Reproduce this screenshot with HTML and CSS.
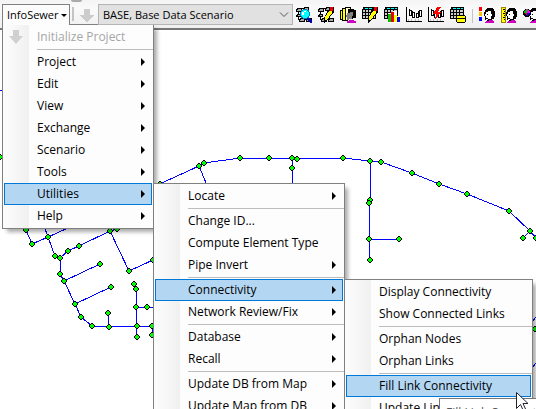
FILE: index.html
```html
<!DOCTYPE html>
<html lang="en">
<head>
<meta charset="utf-8">
<title>InfoSewer</title>
<link rel="stylesheet" href="styles.css">
</head>
<body>
<svg class="defs" aria-hidden="true">
  <defs>
    <symbol id="arrow" viewBox="0 0 14 14"><path d="M4 0h6v6h4l-7 8-7-8h4z"/></symbol>
    <symbol id="net" viewBox="0 0 16 16">
      <path fill="none" stroke="#000" d="M2.5 2.5v5h-2M9 1.500H5M2.500 7.500v5H6M9.500 2v4M4 12.500h9"/>
      <path d="M1 1h5v4H0V2h1zM8 0h5v4H7V1h1zM1 7h4v3H0V8h1zM4 11h5v4H3v-3h1zM11 11h5v4h-6v-3h1z"/>
      <path fill="#aaa" d="M2 2h3v2H1V3h1zM9 1h3v2H8V2h1zM2 8h2v1H2zM5 12h3v2H4v-1h1zM12 12h3v2h-4v-1h1z"/>
    </symbol>
    <symbol id="pencil" viewBox="0 0 16 16">
      <path d="M12 0h4v5l-7 9-3 2V11z"/><path fill="#ff0" d="M11 4h3v2l-5 7H7v-3z"/><path fill="#e00" d="M12 0h3v4h-3z"/>
    </symbol>
    <symbol id="grid" viewBox="0 0 16 16">
      <path d="M1 0h13v12H0V2h1z"/><path fill="#0ff" d="M3 1h3v1H3zM7 1h3v1H7zM11 1h2v1h-2z"/>
      <path fill="#ccc" d="M1 3h2v2H1zM4 3h2v2H4zM7 3h2v2H7zM10 3h3v2h-3zM1 6h2v2H1zM4 6h2v2H4zM7 6h2v2H7zM10 6h3v2h-3zM1 9h2v2H1zM4 9h2v2H4zM7 9h2v2H7zM10 9h3v2h-3z"/>
    </symbol>
    <symbol id="bars" viewBox="0 0 16 16">
      <path fill="none" stroke="#000" d="M.5 0v14.500H16M3.500 2v7M6.500 4v6M12.500 4v4"/>
      <path fill="#fff" stroke="#000" d="M3.500 3.500h2v5h-2zM6.500 5.500h2v5h-2zM10.500 6.500h2v4h-2zM13.500 3.500h2v6h-2z"/>
      <path fill="#bbb" d="M2 12h1v2H2zM5 12h1v2H5zM9 12h1v2H9zM12 12h1v2h-1z"/>
    </symbol>
    <symbol id="head" viewBox="0 0 11 16">
      <path d="M3 1h6v1h1v2h1v6h-1v2H8v2H3v-3H2v2H1V9H0V5h1V3h1V2h1z"/>
      <path fill="#fff" d="M2 5h2V4h3v3h1v2H7v3H4v1H2V9H1V7h1z"/><path d="M3 7h1v1H3zM2 11h2v1H2z"/>
      <path fill="#d000c0" d="M2 14h2l1-1h3l2 1v2H1v-1h1z"/>
    </symbol>
  </defs>
</svg>

<header class="toolbar">
  <div class="dropdown">
    <button class="dropdown-button" type="button" aria-expanded="true">InfoSewer<span class="caret"></span></button>
    <ul class="menu">
      <li class="disabled"><svg class="item-icon"><use href="#arrow"/></svg>Initialize Project</li>
      <li class="rule"></li>
      <li class="more">Project</li>
      <li class="more">Edit</li>
      <li class="more">View</li>
      <li class="more">Exchange</li>
      <li class="more">Scenario</li>
      <li class="more">Tools</li>
      <li class="more active">Utilities
        <ul class="menu sub utilities">
          <li class="more">Locate</li>
          <li class="rule"></li>
          <li>Change ID...</li>
          <li>Compute Element Type</li>
          <li class="more">Pipe Invert</li>
          <li class="rule"></li>
          <li class="more active">Connectivity
            <ul class="menu sub connectivity">
              <li>Display Connectivity</li>
              <li>Show Connected Links</li>
              <li class="rule"></li>
              <li>Orphan Nodes</li>
              <li>Orphan Links</li>
              <li class="rule"></li>
              <li class="active">Fill Link Connectivity
                <span class="tooltip" role="tooltip">Fill Link Connectivity</span>
                <svg class="pointer" viewBox="0 0 13 20"><path d="M.5.500v16l4-4 3 6.500 2.500-1-3-6.500h5z" fill="#fff" stroke="#223"/></svg>
              </li>
              <li>Update Link</li>
            </ul>
          </li>
          <li class="more">Network Review/Fix</li>
          <li class="rule"></li>
          <li class="more">Database</li>
          <li class="more">Recall</li>
          <li class="rule"></li>
          <li class="more">Update DB from Map</li>
          <li class="more">Update Map from DB</li>
        </ul>
      </li>
      <li class="more">Help</li>
    </ul>
  </div>
  <span class="divider"></span>
  <button class="tool faded" type="button" aria-label="Initialize Project"><svg><use href="#arrow"/></svg></button>
  <div class="scenario">
    <select aria-label="Scenario"><option>BASE, Base Data Scenario</option></select>
    <svg class="chevron" viewBox="0 0 10 6"><path d="M1 .500l4 4 4-4" fill="none" stroke="#555"/></svg>
  </div>
  <div class="tools">
    <button class="tool" type="button" aria-label="Find element"><svg viewBox="0 0 16 16"><use href="#net"/><path d="M12 10l4 4v2h-2l-4-4z" fill="#00a"/><circle cx="9" cy="7" r="4.500" fill="#0ff" stroke="#0080c0"/><path fill="#fff" d="M6 5h2v3H6zM8 4h2v1H8z"/></svg></button>
    <button class="tool" type="button" aria-label="Edit network"><svg viewBox="0 0 16 16"><use href="#net"/><use href="#pencil"/></svg></button>
    <button class="tool" type="button" aria-label="Query"><svg viewBox="0 0 16 16"><path d="M2 1h3V0h6v2H8v12H2v-1H0V3h2z"/><path fill="#ff0" d="M1 4h1v8H1zM3 2h2v11H3z"/><path fill="#ffc" d="M6 1h4v12H6z"/><path d="M8 2h6v1h2v8h-3v1H8z"/><path fill="#808080" d="M7 6h3V5h3v4h-1v3H9v1H7v-3H6V8h1z"/><path fill="#d000c0" d="M7 14h2v-1h5v1h2v2H7z"/></svg></button>
    <button class="tool" type="button" aria-label="Edit table"><svg viewBox="0 0 16 16"><use href="#grid"/><use href="#pencil"/></svg></button>
    <button class="tool" type="button" aria-label="Table graph"><svg viewBox="0 0 16 16"><use href="#grid"/><path fill="#fff" d="M4 6h5V4h4v5h3v7H4z"/><path fill="#00c000" d="M4 7h3v8H4z"/><path fill="#e00" d="M7 5h3v10H7z"/><path fill="#ff0" d="M10 8h3v7h-3z"/><path fill="#00f" d="M13 10h3v5h-3z"/></svg></button>
    <button class="tool" type="button" aria-label="Graph"><svg viewBox="0 0 16 16"><use href="#bars"/></svg></button>
    <button class="tool" type="button" aria-label="Run graph"><svg viewBox="0 0 16 16"><use href="#bars"/><path fill="#f00" d="M9 0h4l-3 5h3l-6 8 1-6H5z"/></svg></button>
    <button class="tool" type="button" aria-label="Table database"><svg viewBox="0 0 16 16"><use href="#grid"/><path d="M7 8h8v1h1v6h-1v1H7v-1H6V9h1z"/><path fill="#ff0" d="M7 9h8v2H7zM7 12h8v3H7z"/></svg></button>
    <span class="divider"></span>
    <button class="tool" type="button" aria-label="Color display"><svg viewBox="0 0 16 16"><path fill="#f00" d="M0 0h3v4H0z"/><path fill="#ffc000" d="M0 5h3v4H0z"/><path fill="#00f" d="M0 10h3v4H0z"/><use href="#head" x="5" width="11" height="16"/></svg></button>
    <button class="tool" type="button" aria-label="Size display"><svg viewBox="0 0 16 16"><path fill="#ff0" stroke="#a08000" d="M.5.500h4v15h-4z"/><path d="M2 2h2v1H2zM3 4h1v1H3zM2 6h2v1H2zM3 8h1v1H3zM2 10h2v1H2zM3 12h1v1H3z"/><use href="#head" x="5" width="11" height="16"/></svg></button>
    <button class="tool" type="button" aria-label="Chart display"><svg viewBox="0 0 16 16"><use href="#head" x="6" width="11" height="16"/><circle cx="4" cy="6" r="4"/><path fill="#00c000" d="M1 4l3-2v4H1z"/><path fill="#f0f" d="M4 2l3 2v2H4z"/><path fill="#f00" d="M1 6h3v3z"/><path fill="#00f" d="M4 6h3L4 9z"/></svg></button>
  </div>
</header>

<main class="map">
  <svg class="network" width="540" height="379" viewBox="0 30 540 379">
    <defs>
      <g id="node"><path d="M-1-3H1V-2H2V-1H3V1H2V2H1V3H-1V2H-2V1H-3V-1H-2V-2H-1z"/><path d="M-2-2H2V2H-2z"/><path d="M-1-2H1V-1H2V1H1V2H-1V1H-2V-1H-1z" fill="#0f0"/></g></defs>
    <g class="pipes">
      <path d="M0 91l3-1M18 210l8 20 6 14 16-7 20-9M44 226l4 11 7 19 5 2 8-7 11-5 31-15 7-2M60 258v16l4 7 36-17M64 281l11 23 36-17M75 304l6 13 11 9 17 1-1-14M109 327l28-1h23M110 231l19 40 24-11M134 284l2 5v18l1 30M136 307h24M152 326v9"/>
      <path d="M153 187l46-21 5-3 36-5h52l5 1 46-1 27 3 11 1 31 11 27 11 28 10 42 17 21 20-7 7M530 231l6 7M199 166l10 24M292 158v28M370 161v39l-1 3v36h30M369 239l1 21M533 321l3-4M533 367l3-4"/>
    </g>
    <g>
      <use href="#node" x="0" y="157"/><use href="#node" x="26" y="230"/><use href="#node" x="32" y="244"/><use href="#node" x="48" y="237"/><use href="#node" x="55" y="256"/><use href="#node" x="60" y="258"/><use href="#node" x="68" y="251"/><use href="#node" x="79" y="246"/><use href="#node" x="60" y="274"/><use href="#node" x="64" y="281"/><use href="#node" x="100" y="264"/><use href="#node" x="75" y="304"/><use href="#node" x="111" y="287"/><use href="#node" x="81" y="317"/><use href="#node" x="92" y="326"/><use href="#node" x="109" y="327"/><use href="#node" x="108" y="313"/><use href="#node" x="137" y="326"/><use href="#node" x="137" y="337"/><use href="#node" x="136" y="307"/><use href="#node" x="147" y="307"/><use href="#node" x="136" y="289"/><use href="#node" x="134" y="284"/><use href="#node" x="129" y="271"/><use href="#node" x="110" y="231"/><use href="#node" x="117" y="229"/><use href="#node" x="153" y="260"/><use href="#node" x="152" y="326"/><use href="#node" x="152" y="335"/>
      <use href="#node" x="160" y="184"/><use href="#node" x="199" y="166"/><use href="#node" x="204" y="163"/><use href="#node" x="240" y="158"/><use href="#node" x="269" y="158"/><use href="#node" x="297" y="159"/><use href="#node" x="292" y="158"/><use href="#node" x="292" y="168"/><use href="#node" x="343" y="158"/><use href="#node" x="370" y="161"/><use href="#node" x="381" y="162"/><use href="#node" x="412" y="173"/><use href="#node" x="439" y="184"/><use href="#node" x="467" y="194"/><use href="#node" x="509" y="211"/><use href="#node" x="530" y="231"/><use href="#node" x="523" y="238"/><use href="#node" x="536" y="238"/><use href="#node" x="370" y="200"/><use href="#node" x="369" y="203"/><use href="#node" x="369" y="239"/><use href="#node" x="399" y="239"/><use href="#node" x="370" y="260"/><use href="#node" x="535" y="329"/>
    </g>
  </svg>
</main>
</body>
</html>
```
FILE: styles.css
```css
* { box-sizing: border-box; }

body {
  margin: 0;
  height: 100vh;
  overflow: hidden;
  display: flex;
  flex-direction: column;
  background: #fff;
  color: #000;
  font: 12px/20px "Open Sans", "Noto Sans", sans-serif;
}

button, select { font: inherit; color: inherit; }
.defs { position: absolute; width: 0; height: 0; }

.toolbar {
  position: relative;
  z-index: 1;
  flex: none;
  display: flex;
  align-items: flex-start;
  height: 30px;
  padding: 4px 0 0 2px;
  border-bottom: 2px solid #777;
  background: linear-gradient(#f4f4f4, #fafafa 30%, #f0f0f0);
}
.toolbar::before {
  content: "";
  position: absolute;
  top: 0;
  left: 71px;
  width: 11px;
  height: 2px;
  border-radius: 0 0 4px 4px;
  background: #aaa;
}

.dropdown { position: relative; }
.dropdown-button {
  position: relative;
  z-index: 2;
  display: flex;
  align-items: center;
  justify-content: space-between;
  width: 68px;
  height: 21px;
  padding: 0 2px 0 4px;
  border: 1px solid #808080;
  border-bottom: 0;
  background: #fcfcfc;
  font-size: 11px;
  white-space: nowrap;
}
.caret { flex: none; border: 3px solid transparent; border-top-color: #000; border-bottom: 0; }

.divider { flex: none; width: 2px; height: 14px; margin: 3px 0 0 2px; background: #c4c4c4; }

.tool {
  flex: none;
  width: 16px;
  height: 16px;
  padding: 0;
  border: 0;
  background: none;
}
.tool svg { display: block; width: 16px; height: 16px; shape-rendering: crispEdges; }
.faded { margin: 4px 2px 0 6px; }
.faded svg { width: 14px; height: 14px; fill: #ccc; }

.scenario { position: relative; flex: none; width: 195px; }
.scenario select {
  appearance: none;
  display: block;
  width: 100%;
  height: 21px;
  padding: 0 4px;
  border: 1px solid #b4b4b4;
  border-radius: 0;
  background: #e1e1e1;
  font-size: 11px;
}
.chevron { position: absolute; right: 4px; top: 8px; width: 10px; height: 6px; }

.tools { display: flex; gap: 6px; padding: 3px 0 0 3px; }
.tools .divider { width: 1px; margin: 2px 0 0; }

.menu {
  position: absolute;
  top: 20px;
  left: 0;
  width: 152px;
  margin: 0;
  padding: 1px;
  list-style: none;
  border: 1px solid #808080;
  background: linear-gradient(90deg, #fcfcfc 2px, #f0f0f0 26px, #fdfdfd 26px);
  box-shadow: 4px 4px 4px -1px #0005;
}
.menu li {
  position: relative;
  height: 22px;
  padding: 0 0 0 32px;
  border: 1px solid transparent;
  white-space: nowrap;
}
.menu .rule { height: 3px; margin: 0 -1px 0 33px; padding: 0; border: solid #fdfdfd; border-width: 1px 0; background: #bdbdbd; }
.menu .active { border-color: #0078d7; background: #b3d7f3; }
.menu .disabled { color: #a6a6a6; }
.more::after {
  content: "";
  position: absolute;
  top: 6px;
  right: 6px;
  border: 4px solid transparent;
  border-left-color: #000;
  border-right: 0;
}
.item-icon { position: absolute; left: 4px; top: 3px; width: 14px; height: 14px; fill: #d0d0d0; }

.menu .sub { top: -1px; left: calc(100% + 2px); z-index: 1; }
.utilities { width: 192px; }
.connectivity { width: 189px; }

.tooltip {
  position: absolute;
  z-index: 2;
  top: 22px;
  left: 92px;
  padding: 4px 6px;
  border: 1px solid #767676;
  background: #fff;
  color: #575757;
}
.pointer { position: absolute; z-index: 3; top: 16px; right: 1px; width: 13px; height: 20px; }

.map { flex: 1; min-height: 0; overflow: hidden; }
.network { display: block; shape-rendering: crispEdges; }
.pipes { fill: none; stroke: #00f; }
```
